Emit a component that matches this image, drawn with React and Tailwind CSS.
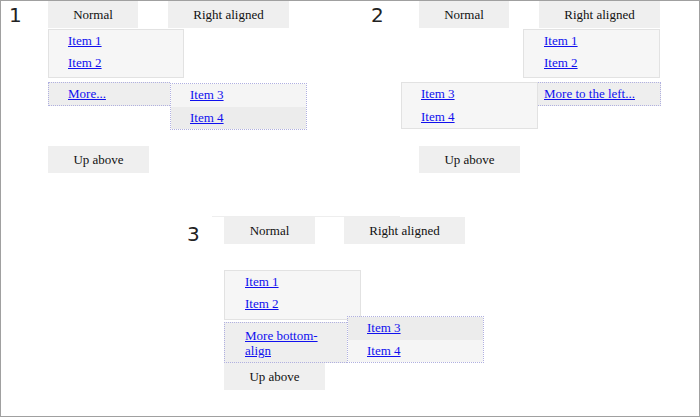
import React from "react";

function Num({ n, cls }) {
  return (
    <div className={`shrink-0 font-['DejaVu_Sans',sans-serif] text-[20px] leading-[20px] text-[#222] ${cls}`}>
      {n}
    </div>
  );
}

function Btn({ w, children }) {
  return (
    <div className={`h-[27px] ${w} bg-[#efefef] flex items-center justify-center text-[13px] text-[#111] whitespace-nowrap`}>
      {children}
    </div>
  );
}

function L({ children }) {
  return (
    <a href="#" className="text-[#1010ee] underline underline-offset-[1px]">
      {children}
    </a>
  );
}

function Menu({ cls, pl }) {
  return (
    <div className={`absolute border border-[#e2e2e2] bg-[#f6f6f6] ${cls}`}>
      <div className={`h-[22px] leading-[22px] ${pl}`}>
        <L>Item 1</L>
      </div>
      <div className={`h-[22px] leading-[22px] ${pl}`}>
        <L>Item 2</L>
      </div>
    </div>
  );
}

export default function App() {
  return (
    <div className="w-[700px] h-[417px] border border-[#a0a0a0] bg-white overflow-hidden font-['Liberation_Serif','Times_New_Roman',serif] text-[13px] text-[#111]">
      <div className="flex">
        {/* Panel 1 */}
        <div className="relative flex w-[362px] shrink-0">
          <Num n="1" cls="w-[47px] pl-[8px] pt-[4px]" />
          <div className="flex flex-col">
            <div className="flex gap-[30px]">
              <Btn w="w-[90px]">Normal</Btn>
              <Btn w="w-[121px]">Right aligned</Btn>
            </div>
            <div className="mt-[118px]">
              <Btn w="w-[101px]">Up above</Btn>
            </div>
          </div>
          <Menu cls="left-[47px] top-[28px] w-[136px] h-[49px]" pl="pl-[19px]" />
          <div className="absolute left-[47px] top-[81px] w-[122px] h-[24px] bg-[#eeeeee] border-l border-b border-t border-dotted border-[#b0b0e0] pl-[19px] leading-[22px]">
            <L>More...</L>
          </div>
          <div className="absolute left-[169px] top-[82px] w-[137px] h-[47px] border border-dotted border-[#b0b0e0]">
            <div className="h-[23px] leading-[22px] bg-[#f5f5f5] pl-[19px]">
              <L>Item 3</L>
            </div>
            <div className="h-[22px] leading-[22px] bg-[#ececec] pl-[19px]">
              <L>Item 4</L>
            </div>
          </div>
        </div>

        {/* Panel 2 */}
        <div className="relative flex flex-1">
          <Num n="2" cls="w-[56px] pl-[8px] pt-[4px]" />
          <div className="flex flex-col">
            <div className="flex gap-[30px]">
              <Btn w="w-[90px]">Normal</Btn>
              <Btn w="w-[121px]">Right aligned</Btn>
            </div>
            <div className="mt-[118px]">
              <Btn w="w-[101px]">Up above</Btn>
            </div>
          </div>
          <Menu cls="left-[160px] top-[28px] w-[137px] h-[49px]" pl="pl-[20px]" />
          <div className="absolute left-[160px] top-[81px] w-[138px] h-[24px] bg-[#eeeeee] border-l border-r border-b border-t border-dotted border-[#b0b0e0] pl-[20px] leading-[22px]">
            <L>More to the left...</L>
          </div>
          <div className="absolute left-[38px] top-[81px] w-[137px] h-[47px] border border-[#e2e2e2] bg-[#f6f6f6]">
            <div className="h-[23px] leading-[22px] pl-[19px]">
              <L>Item 3</L>
            </div>
            <div className="h-[22px] leading-[22px] pl-[19px]">
              <L>Item 4</L>
            </div>
          </div>
        </div>
      </div>

      {/* Panel 3 */}
      <div className="relative flex mt-[43px] ml-[176px] w-[320px]">
        <div className="absolute left-[35px] top-0 w-[188px] h-px bg-[#eeeeee]" />
        <Num n="3" cls="w-[47px] pl-[10px] pt-[8px]" />
        <div className="flex flex-col">
          <div className="flex gap-[29px] mt-[1px]">
            <Btn w="w-[91px]">Normal</Btn>
            <Btn w="w-[121px]">Right aligned</Btn>
          </div>
          <div className="mt-[119px]">
            <Btn w="w-[101px]">Up above</Btn>
          </div>
        </div>
        <Menu cls="left-[47px] top-[54px] w-[137px] h-[50px]" pl="pl-[20px]" />
        <div className="absolute left-[47px] top-[106px] w-[123px] h-[41px] bg-[#eeeeee] border-l border-b border-t border-dotted border-[#b0b0e0] pl-[20px] pt-[5px] leading-[15px]">
          <L>
            More bottom-
            <br />
            align
          </L>
        </div>
        <div className="absolute left-[170px] top-[100px] w-[137px] h-[47px] border border-dotted border-[#b0b0e0]">
          <div className="h-[23px] leading-[22px] bg-[#ececec] pl-[19px]">
            <L>Item 3</L>
          </div>
          <div className="h-[22px] leading-[22px] bg-[#f5f5f5] pl-[19px]">
            <L>Item 4</L>
          </div>
        </div>
      </div>
    </div>
  );
}
